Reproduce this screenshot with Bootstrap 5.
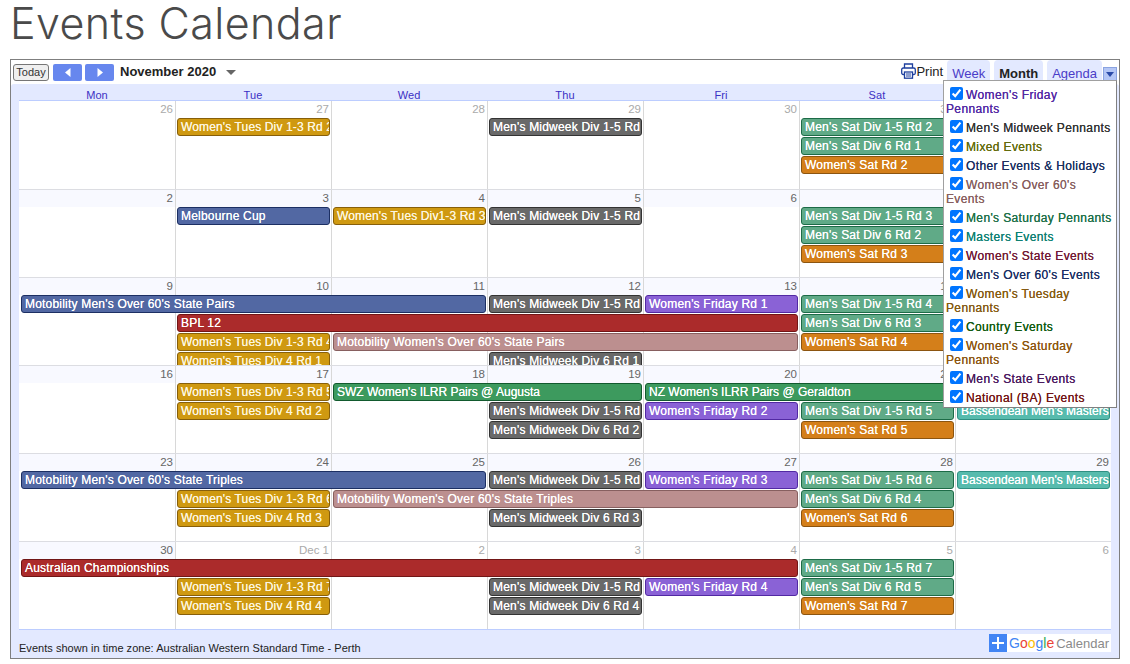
<!DOCTYPE html>
<html lang="en">
<head>
<meta charset="utf-8">
<title>Events Calendar</title>
<link href="https://cdn.jsdelivr.net/npm/bootstrap@5.3.0/dist/css/bootstrap.min.css" rel="stylesheet">
<style>
html,body{height:100%;overflow:hidden;background:#fff}
body{font-family:"Liberation Sans",Arial,sans-serif;font-size:12px;padding:0 10px;color:#222}
.page-title{font-family:Inter,Roboto,sans-serif;font-weight:300;font-size:43px;line-height:46px;height:59px;margin:0;color:#4a4a4a;letter-spacing:.42px;white-space:nowrap}
.cal-frame{border:1px solid #7f7f7f;height:600px;width:1110px;position:relative}
.cal-bar{height:24px;position:relative}
.today-btn{border:1px solid #767676;background:#efefef;border-radius:3px;font-size:11px;line-height:14px;height:17px;width:36px;padding:0;color:#333;margin-left:2px}
.nav-btn{width:29px;height:17px;background:#6787ee;border:0;border-radius:2px;padding:0;margin-left:3px}
.nav-btn.nav-first{margin-left:4px}
.month-title{font-size:13px;font-weight:700;color:#222;margin-left:6px}
.month-caret{width:0;height:0;border:5px solid transparent;border-top:5px solid #666;border-bottom:0;margin-left:10px}
.print-link{color:#222;font-size:13px;margin-right:4px;padding-top:3px;line-height:15px}
.tab-item{background:#e3e9ff;height:24px;border-radius:4px 4px 0 0;font-size:13px;line-height:27px;padding:0 5px;color:#4a3cc8}
.tab-on{color:#222;font-weight:700}
.tab-more{width:14px;height:14px;background:#b4c6f5;border:1px solid #8aa3e0;margin-left:1px;margin-right:2px;margin-top:7px}
.tab-more i{display:block;width:0;height:0;border:4px solid transparent;border-top:5px solid #2a4aa8;border-bottom:0;margin:4px 0 0 2px}
.cal-body{background:#e3e9ff;height:574px;padding:0 8px;border-radius:3px 3px 0 0}
.cal-days{display:grid;grid-template-columns:repeat(7,156px);height:16px;text-align:center;font-size:11px;line-height:22px;color:#3b30c4;letter-spacing:.1px}
.cal-week{display:grid;grid-template-columns:repeat(7,156px);grid-template-rows:17px repeat(4,19px);height:88px;overflow:hidden;background:#fff;border-top:1px solid #dcdde2;box-sizing:border-box}
.cal-week.wk-first{border-top-color:#bccdff;height:89px}
.cal-end{height:1px;background:#bccdff}
.day-cell{grid-row:1/6;border-left:1px solid #d8d8d8}
.day-cell:nth-child(1){grid-column:1;border-left:0}
.day-cell:nth-child(2){grid-column:2}
.day-cell:nth-child(3){grid-column:3}
.day-cell:nth-child(4){grid-column:4}
.day-cell:nth-child(5){grid-column:5}
.day-cell:nth-child(6){grid-column:6}
.day-cell:nth-child(7){grid-column:7}
.day-num{height:17px;text-align:right;padding-right:2px;font-size:11.5px;line-height:17px;color:#666;background:#f8f9ff}
.day-out .day-num{color:#aaa;background:#fff}
.ev{height:18px;margin:0 1px 0 2px;border:1px solid;border-radius:3px;color:#fff;font-size:12px;letter-spacing:.2px;line-height:16px;padding:0 3px;white-space:nowrap;overflow:hidden;text-shadow:0 0 .5px currentColor}
.r1{grid-row:2}.r2{grid-row:3}.r3{grid-row:4}.r4{grid-row:5}
.c1{grid-column-start:1}.c2{grid-column-start:2}.c3{grid-column-start:3}.c4{grid-column-start:4}.c5{grid-column-start:5}.c6{grid-column-start:6}.c7{grid-column-start:7}
.s2{grid-column-end:span 2}.s3{grid-column-end:span 3}.s4{grid-column-end:span 4}.s5{grid-column-end:span 5}
.e-tue{background:#cf9911;border-color:#875f0a;color:#fdf6df;letter-spacing:.13px}
.e-mid{background:#696969;border-color:#333}
.e-sat{background:#60aa87;border-color:#1d6b47}
.e-wsa{background:#d47f1a;border-color:#8c5510}
.e-blu{background:#5268a3;border-color:#1c2f63}
.e-pur{background:#8a62d6;border-color:#5229a3}
.e-red{background:#ab2b2b;border-color:#711616}
.e-ros{background:#bc8f8f;border-color:#875f5f}
.e-grn{background:#3d9a5e;border-color:#125a2e;letter-spacing:0}
.e-tea{background:#57bbad;border-color:#2f8f82;letter-spacing:0}
.cal-foot{height:27px;position:relative}
.tz-note{font-size:11px;line-height:14px;padding-top:11px;color:#222;letter-spacing:.03px}
.gc-logo{background:#fff;height:18px;margin-top:4px;width:122px;gap:2px}
.gc-plus{width:18px;height:18px;background:#4285f4;flex:none}
.gc-name{font-family:"Liberation Sans",Arial,sans-serif;font-size:14px;line-height:18px;white-space:nowrap}
.gc-gray{color:#8a8a8a;margin-left:2px;font-size:13px}
.g-b{color:#4285f4}.g-r{color:#ea4335}.g-y{color:#fbbc05}.g-g{color:#34a853}
.cal-menu{position:absolute;left:932px;top:20px;width:174px;height:328px;background:#fff;border:1px solid #a0a0a0;border-right-color:#808080;border-bottom-color:#808080;padding:6px 4px 0 2px;z-index:5;font-size:12px;letter-spacing:.37px;line-height:14px;text-shadow:0 0 .3px currentColor}
.cal-menu label{display:block;margin-bottom:4px}
.cal-menu input{width:13px;height:13px;margin:0 3px 0 4px;vertical-align:-1px}
</style>
</head>
<body>
<h1 class="page-title">Events Calendar</h1>
<div class="cal-frame">
  <div class="cal-bar d-flex align-items-center">
    <button class="today-btn" type="button">Today</button>
    <button class="nav-btn nav-first d-flex align-items-center justify-content-center" type="button" aria-label="Previous"><svg width="6" height="9" viewBox="0 0 6 9"><path d="M5.5 0v9L0 4.5z" fill="#fff"/></svg></button>
    <button class="nav-btn d-flex align-items-center justify-content-center" type="button" aria-label="Next"><svg width="6" height="9" viewBox="0 0 6 9"><path d="M.5 0v9L6 4.5z" fill="#fff"/></svg></button>
    <span class="month-title">November 2020</span>
    <span class="month-caret"></span>
    <div class="ms-auto d-flex align-items-start align-self-start">
      <div class="print-link d-flex align-items-center">
        <svg width="15" height="16" viewBox="0 0 15 16" fill="none" stroke="#1d3f9e" stroke-width="1.3"><path d="M3.5 5V1h8v4"/><rect x=".7" y="5" width="13.6" height="6.5" rx="1.5"/><rect x="3.5" y="9" width="8" height="6.2" fill="#fff"/><path d="M5 11h5M5 13h5" stroke-width="1"/></svg>
        <span>Print</span>
      </div>
      <div class="tab-item">Week</div>
      <div class="tab-item tab-on ms-1">Month</div>
      <div class="tab-item ms-1">Agenda</div>
      <div class="tab-more"><i></i></div>
    </div>
  </div>
  <div class="cal-menu">
    <label style="color:#5229a3"><input type="checkbox" checked>Women's Friday Pennants</label>
    <label style="color:#333"><input type="checkbox" checked>Men's Midweek Pennants</label>
    <label style="color:#636b0c"><input type="checkbox" checked>Mixed Events</label>
    <label style="color:#1b2f5f"><input type="checkbox" checked>Other Events &amp; Holidays</label>
    <label style="color:#875f5f"><input type="checkbox" checked>Women's Over 60's Events</label>
    <label style="color:#1f7048"><input type="checkbox" checked>Men's Saturday Pennants</label>
    <label style="color:#0f8072"><input type="checkbox" checked>Masters Events</label>
    <label style="color:#711a35"><input type="checkbox" checked>Women's State Events</label>
    <label style="color:#1c2f63"><input type="checkbox" checked>Men's Over 60's Events</label>
    <label style="color:#855a12"><input type="checkbox" checked>Women's Tuesday Pennants</label>
    <label style="color:#125a12"><input type="checkbox" checked>Country Events</label>
    <label style="color:#8c5510"><input type="checkbox" checked>Women's Saturday Pennants</label>
    <label style="color:#4a1a5e"><input type="checkbox" checked>Men's State Events</label>
    <label style="color:#711616"><input type="checkbox" checked>National (BA) Events</label>
  </div>
  <div class="cal-body">
    <div class="cal-days"><div>Mon</div><div>Tue</div><div>Wed</div><div>Thu</div><div>Fri</div><div>Sat</div><div>Sun</div></div>

    <div class="cal-week wk-first">
      <div class="day-cell day-out"><div class="day-num">26</div></div>
      <div class="day-cell day-out"><div class="day-num">27</div></div>
      <div class="day-cell day-out"><div class="day-num">28</div></div>
      <div class="day-cell day-out"><div class="day-num">29</div></div>
      <div class="day-cell day-out"><div class="day-num">30</div></div>
      <div class="day-cell day-out"><div class="day-num">31</div></div>
      <div class="day-cell"><div class="day-num">1</div></div>
      <div class="ev e-tue r1 c2">Women's Tues Div 1-3 Rd 2</div>
      <div class="ev e-mid r1 c4">Men's Midweek Div 1-5 Rd 1</div>
      <div class="ev e-sat r1 c6">Men's Sat Div 1-5 Rd 2</div>
      <div class="ev e-sat r2 c6">Men's Sat Div 6 Rd 1</div>
      <div class="ev e-wsa r3 c6">Women's Sat Rd 2</div>
    </div>

    <div class="cal-week">
      <div class="day-cell"><div class="day-num">2</div></div>
      <div class="day-cell"><div class="day-num">3</div></div>
      <div class="day-cell"><div class="day-num">4</div></div>
      <div class="day-cell"><div class="day-num">5</div></div>
      <div class="day-cell"><div class="day-num">6</div></div>
      <div class="day-cell"><div class="day-num">7</div></div>
      <div class="day-cell"><div class="day-num">8</div></div>
      <div class="ev e-blu r1 c2">Melbourne Cup</div>
      <div class="ev e-tue r1 c3">Women's Tues Div1-3 Rd 3</div>
      <div class="ev e-mid r1 c4">Men's Midweek Div 1-5 Rd 2</div>
      <div class="ev e-sat r1 c6">Men's Sat Div 1-5 Rd 3</div>
      <div class="ev e-sat r2 c6">Men's Sat Div 6 Rd 2</div>
      <div class="ev e-wsa r3 c6">Women's Sat Rd 3</div>
    </div>

    <div class="cal-week">
      <div class="day-cell"><div class="day-num">9</div></div>
      <div class="day-cell"><div class="day-num">10</div></div>
      <div class="day-cell"><div class="day-num">11</div></div>
      <div class="day-cell"><div class="day-num">12</div></div>
      <div class="day-cell"><div class="day-num">13</div></div>
      <div class="day-cell"><div class="day-num">14</div></div>
      <div class="day-cell"><div class="day-num">15</div></div>
      <div class="ev e-blu r1 c1 s3">Motobility Men's Over 60's State Pairs</div>
      <div class="ev e-mid r1 c4">Men's Midweek Div 1-5 Rd 3</div>
      <div class="ev e-pur r1 c5">Women's Friday Rd 1</div>
      <div class="ev e-sat r1 c6">Men's Sat Div 1-5 Rd 4</div>
      <div class="ev e-red r2 c2 s4">BPL 12</div>
      <div class="ev e-sat r2 c6">Men's Sat Div 6 Rd 3</div>
      <div class="ev e-tue r3 c2">Women's Tues Div 1-3 Rd 4</div>
      <div class="ev e-ros r3 c3 s3">Motobility Women's Over 60's State Pairs</div>
      <div class="ev e-wsa r3 c6">Women's Sat Rd 4</div>
      <div class="ev e-tue r4 c2">Women's Tues Div 4 Rd 1</div>
      <div class="ev e-mid r4 c4">Men's Midweek Div 6 Rd 1</div>
    </div>

    <div class="cal-week">
      <div class="day-cell"><div class="day-num">16</div></div>
      <div class="day-cell"><div class="day-num">17</div></div>
      <div class="day-cell"><div class="day-num">18</div></div>
      <div class="day-cell"><div class="day-num">19</div></div>
      <div class="day-cell"><div class="day-num">20</div></div>
      <div class="day-cell"><div class="day-num">21</div></div>
      <div class="day-cell"><div class="day-num">22</div></div>
      <div class="ev e-tue r1 c2">Women's Tues Div 1-3 Rd 5</div>
      <div class="ev e-grn r1 c3 s2">SWZ Women's ILRR Pairs @ Augusta</div>
      <div class="ev e-grn r1 c5 s3">NZ Women's ILRR Pairs @ Geraldton</div>
      <div class="ev e-tue r2 c2">Women's Tues Div 4 Rd 2</div>
      <div class="ev e-mid r2 c4">Men's Midweek Div 1-5 Rd 4</div>
      <div class="ev e-pur r2 c5">Women's Friday Rd 2</div>
      <div class="ev e-sat r2 c6">Men's Sat Div 1-5 Rd 5</div>
      <div class="ev e-tea r2 c7">Bassendean Men's Masters</div>
      <div class="ev e-mid r3 c4">Men's Midweek Div 6 Rd 2</div>
      <div class="ev e-wsa r3 c6">Women's Sat Rd 5</div>
    </div>

    <div class="cal-week">
      <div class="day-cell"><div class="day-num">23</div></div>
      <div class="day-cell"><div class="day-num">24</div></div>
      <div class="day-cell"><div class="day-num">25</div></div>
      <div class="day-cell"><div class="day-num">26</div></div>
      <div class="day-cell"><div class="day-num">27</div></div>
      <div class="day-cell"><div class="day-num">28</div></div>
      <div class="day-cell"><div class="day-num">29</div></div>
      <div class="ev e-blu r1 c1 s3">Motobility Men's Over 60's State Triples</div>
      <div class="ev e-mid r1 c4">Men's Midweek Div 1-5 Rd 5</div>
      <div class="ev e-pur r1 c5">Women's Friday Rd 3</div>
      <div class="ev e-sat r1 c6">Men's Sat Div 1-5 Rd 6</div>
      <div class="ev e-tea r1 c7">Bassendean Men's Masters</div>
      <div class="ev e-tue r2 c2">Women's Tues Div 1-3 Rd 6</div>
      <div class="ev e-ros r2 c3 s3">Motobility Women's Over 60's State Triples</div>
      <div class="ev e-sat r2 c6">Men's Sat Div 6 Rd 4</div>
      <div class="ev e-tue r3 c2">Women's Tues Div 4 Rd 3</div>
      <div class="ev e-mid r3 c4">Men's Midweek Div 6 Rd 3</div>
      <div class="ev e-wsa r3 c6">Women's Sat Rd 6</div>
    </div>

    <div class="cal-week">
      <div class="day-cell"><div class="day-num">30</div></div>
      <div class="day-cell day-out"><div class="day-num">Dec 1</div></div>
      <div class="day-cell day-out"><div class="day-num">2</div></div>
      <div class="day-cell day-out"><div class="day-num">3</div></div>
      <div class="day-cell day-out"><div class="day-num">4</div></div>
      <div class="day-cell day-out"><div class="day-num">5</div></div>
      <div class="day-cell day-out"><div class="day-num">6</div></div>
      <div class="ev e-red r1 c1 s5">Australian Championships</div>
      <div class="ev e-sat r1 c6">Men's Sat Div 1-5 Rd 7</div>
      <div class="ev e-tue r2 c2">Women's Tues Div 1-3 Rd 7</div>
      <div class="ev e-mid r2 c4">Men's Midweek Div 1-5 Rd 6</div>
      <div class="ev e-pur r2 c5">Women's Friday Rd 4</div>
      <div class="ev e-sat r2 c6">Men's Sat Div 6 Rd 5</div>
      <div class="ev e-tue r3 c2">Women's Tues Div 4 Rd 4</div>
      <div class="ev e-mid r3 c4">Men's Midweek Div 6 Rd 4</div>
      <div class="ev e-wsa r3 c6">Women's Sat Rd 7</div>
    </div>
    <div class="cal-end"></div>
    <div class="cal-foot d-flex justify-content-between">
      <div class="tz-note">Events shown in time zone: Australian Western Standard Time - Perth</div>
      <div class="gc-logo d-flex align-items-center">
        <span class="gc-plus d-flex align-items-center justify-content-center"><svg width="12" height="12" viewBox="0 0 12 12"><path d="M5 0h2v5h5v2H7v5H5V7H0V5h5z" fill="#fff"/></svg></span>
        <span class="gc-name"><span class="g-b">G</span><span class="g-r">o</span><span class="g-y">o</span><span class="g-b">g</span><span class="g-g">l</span><span class="g-r">e</span><span class="gc-gray">Calendar</span></span>
      </div>
    </div>
  </div>
</div>
<script src="https://cdn.jsdelivr.net/npm/bootstrap@5.3.0/dist/js/bootstrap.bundle.min.js"></script>
</body>
</html>
